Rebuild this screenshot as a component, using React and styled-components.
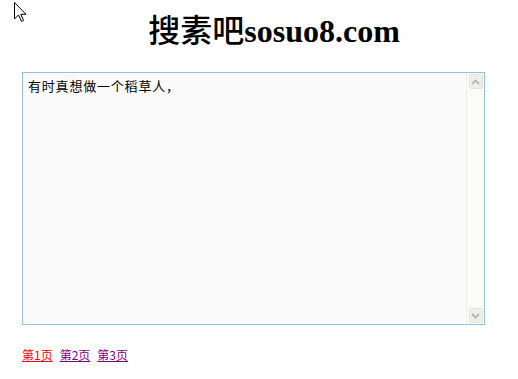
import React from "react";
import styled, { createGlobalStyle } from "styled-components";

const Global = createGlobalStyle`
  html, body { margin: 0; padding: 0; background: #fff; }
  body { width: 518px; height: 379px; overflow: hidden; position: relative; }
`;

const Page = styled.div`
  display: flex;
  flex-direction: column;
  padding: 0 0 0 22px;
`;

const Title = styled.h1`
  margin: 9px 0 0 0;
  height: 38px;
  padding-left: 4px;
  text-align: center;
  width: 496px;
  font-size: 32px;
  line-height: 38px;
  font-weight: bold;
  color: #000;
  font-family: "Liberation Serif", "Noto Sans CJK SC", serif;
`;

const Cjk = styled.span`
  font-family: "Noto Sans CJK SC", serif;
  font-weight: 500;
`;

const Frame = styled.div`
  margin-top: 25px;
  width: 461px;
  height: 251px;
  border: 1px solid #95bde6;
  background: #fafafa;
  display: flex;
`;

const Text = styled.textarea`
  flex: 1;
  border: none;
  outline: none;
  resize: none;
  background: transparent;
  margin: 0;
  padding: 5px 0 0 5px;
  font-family: "Noto Sans CJK SC", sans-serif;
  font-size: 13px;
  letter-spacing: 0.8px;
  line-height: 16px;
  color: #000;
  overflow: hidden;
`;

const Track = styled.div`
  width: 17px;
  border-left: 1px solid #ededea;
  background: #fcfcf7;
  display: flex;
  flex-direction: column;
  justify-content: space-between;
  align-items: center;
  padding: 1px 0;
`;

const ArrowBtn = styled.div`
  width: 14px;
  height: 15px;
  box-sizing: border-box;
  border: 1px solid #e4e4df;
  background: #efefea;
  border-radius: 2px;
  display: flex;
  align-items: center;
  justify-content: center;
`;

const Pager = styled.div`
  margin-top: 23px;
  display: flex;
  gap: 7px;
  font-family: "Noto Sans CJK SC", sans-serif;
  font-size: 12px;
  line-height: 14px;
`;

const PageLink = styled.a`
  color: ${(p) => (p.$current ? "#ff0000" : "#800080")};
  text-decoration: underline;
  cursor: pointer;
`;

const Pointer = styled.svg`
  position: absolute;
  left: 14px;
  top: 2px;
`;

const Chevron = ({ down }) => (
  <svg width="9" height="6" viewBox="0 0 9 6">
    <path
      d={down ? "M1 1 L4.5 4.5 L8 1" : "M1 5 L4.5 1.5 L8 5"}
      fill="none"
      stroke="#b9b9b4"
      strokeWidth="2"
    />
  </svg>
);

export default function App() {
  return (
    <>
      <Global />
      <Page>
        <Title>
          <Cjk>搜素吧</Cjk>sosuo8.com
        </Title>
        <Frame>
          <Text defaultValue="有时真想做一个稻草人，" readOnly />
          <Track>
            <ArrowBtn>
              <Chevron />
            </ArrowBtn>
            <ArrowBtn>
              <Chevron down />
            </ArrowBtn>
          </Track>
        </Frame>
        <Pager>
          <PageLink $current>第1页</PageLink>
          <PageLink>第2页</PageLink>
          <PageLink>第3页</PageLink>
        </Pager>
      </Page>
      <Pointer width="13" height="21" viewBox="0 0 13 21">
        <path
          d="M0.5 0.5 L0.5 17 L4.5 13 L7.5 19.5 L9.5 18.5 L6.8 12.3 L12 12.3 Z"
          fill="#fff"
          stroke="#000"
          strokeWidth="1"
        />
      </Pointer>
    </>
  );
}
